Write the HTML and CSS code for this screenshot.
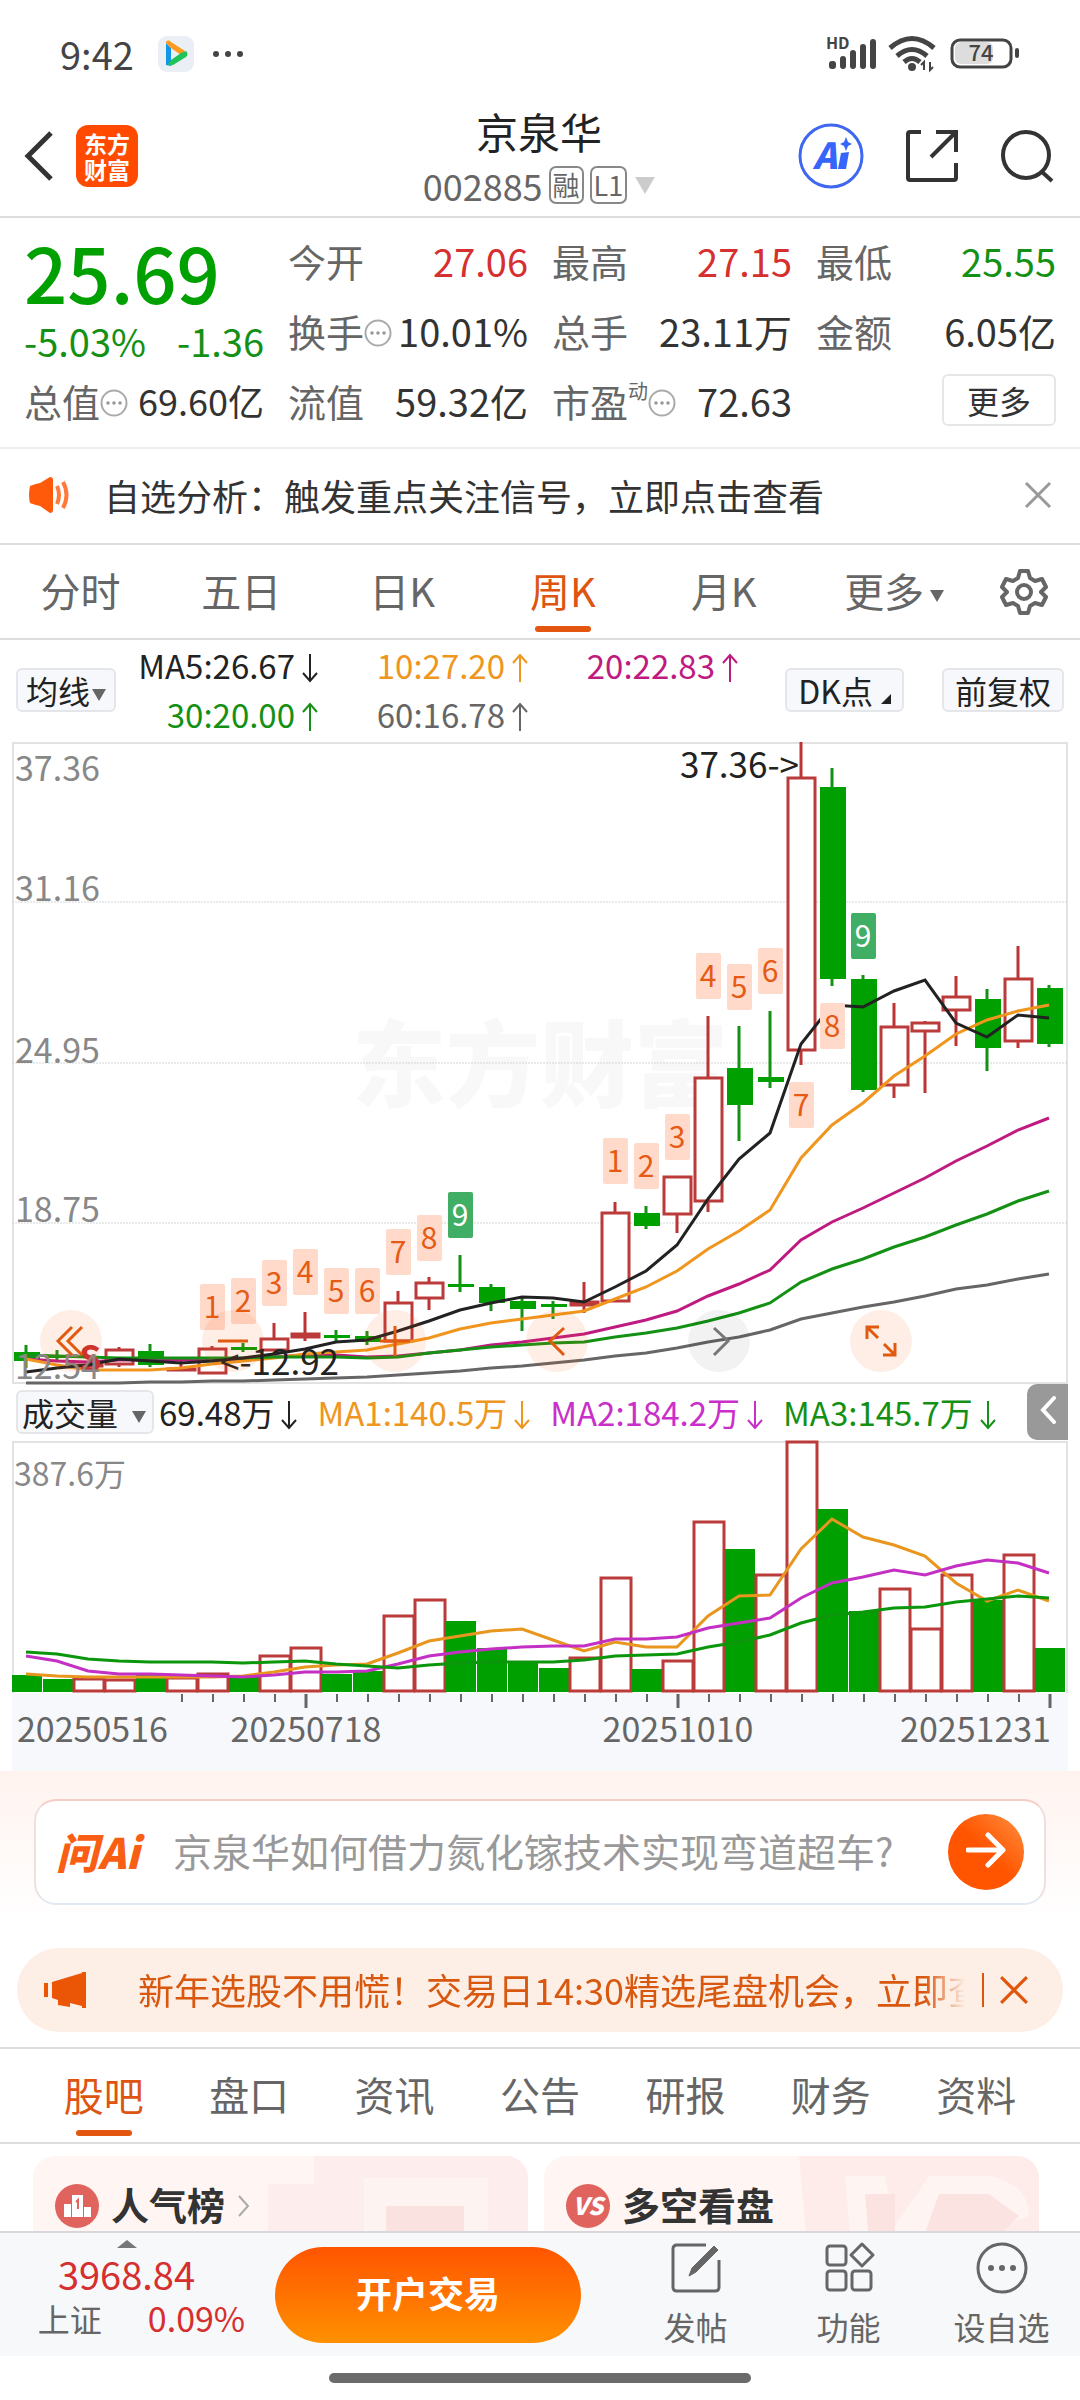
FILE: index.html
```html
<!DOCTYPE html>
<html lang="zh-CN">
<head>
  <meta charset="UTF-8">
  <meta name="viewport" content="width=device-width, initial-scale=1.0">
  <title>京泉华 002885</title>
  <link rel="stylesheet" href="styles.css">
</head>
<body>
  <!-- shared icons -->
  <svg class="sprite" aria-hidden="true">
    <symbol id="up" viewBox="0 0 18 30"><path d="M9 29V2M2 10l7-8 7 8" fill="none" stroke="currentColor" stroke-width="2"/></symbol>
    <symbol id="down" viewBox="0 0 18 30"><path d="M9 1v27M2 20l7 8 7-8" fill="none" stroke="currentColor" stroke-width="2"/></symbol>
    <symbol id="info" viewBox="0 0 28 28"><circle cx="14" cy="14" r="12.5" fill="none" stroke="#aaa" stroke-width="2"/><g fill="#999"><circle cx="8" cy="14" r="1.8"/><circle cx="14" cy="14" r="1.8"/><circle cx="20" cy="14" r="1.8"/></g></symbol>
    <symbol id="caret" viewBox="0 0 14 12"><path d="M0 0h14l-7 12z" fill="currentColor"/></symbol>
    <symbol id="close" viewBox="0 0 28 28"><path d="M2 2l24 24M26 2L2 26" fill="none" stroke="currentColor" stroke-width="3"/></symbol>
  </svg>

  <div class="status-bar">
    <span class="time">9:42</span>
    <svg class="app-icon" viewBox="0 0 36 36"><rect width="36" height="36" rx="9" fill="#e9eff5"/><path d="M8 7v22l5 1V12z" fill="#1296e8"/><path d="M8 7c0-3 3-3 5-1l14 9-4 4-10-7z" fill="#ff9a1f"/><path d="M13 24l10-7 5-2c2 2 2 4 0 6L15 29c-3 1-5 0-5-1z" fill="#20c35a"/></svg>
    <svg class="more-dots" viewBox="0 0 32 8" fill="#444"><circle cx="4" cy="4" r="3"/><circle cx="16" cy="4" r="3"/><circle cx="28" cy="4" r="3"/></svg>
    <svg class="status-icons" viewBox="0 0 194 40" fill="#444">
      <text x="0" y="15" class="hd">HD</text>
      <rect x="3" y="27" width="7" height="8" rx="3"/><rect x="14" y="22" width="6" height="13" rx="3"/><rect x="24" y="16" width="6" height="19" rx="3"/><rect x="34" y="10" width="6" height="25" rx="3"/><rect x="44" y="5" width="6" height="30" rx="3"/>
      <g fill="none" stroke="#444" stroke-width="5"><path d="M64 14q22-19 44 0"/><path d="M71 22q15-13 30 0"/><path d="M78 28q8-7 16 0"/></g>
      <circle cx="86" cy="33" r="4"/>
      <path d="M98 36v-8l-3 3M104 28v8l3-3" fill="none" stroke="#444" stroke-width="2"/>
      <rect x="129" y="8" width="38" height="22" rx="6" fill="#ddd"/>
      <rect x="126" y="6" width="59" height="27" rx="8" fill="none" stroke="#444" stroke-width="3"/>
      <rect x="189" y="14" width="4" height="10" rx="2"/>
      <text x="155" y="27" text-anchor="middle" class="battery">74</text>
    </svg>
  </div>

  <header class="header">
    <div class="header-side">
      <button class="icon-btn" aria-label="返回"><svg width="30" height="50" viewBox="0 0 30 50"><path d="M27 2L4 25l23 23" fill="none" stroke="#333" stroke-width="5"/></svg></button>
      <a class="logo" href="#">东方<br>财富</a>
    </div>
    <div class="header-title">
      <h1>京泉华</h1>
      <p>002885<span class="tag">融</span><span class="tag">L1</span><svg class="code-caret"><use href="#caret"/></svg></p>
    </div>
    <div class="header-side header-actions">
      <button class="icon-btn" aria-label="Ai"><svg width="66" height="66" viewBox="0 0 66 66"><circle cx="33" cy="33" r="31" fill="none" stroke="#3f67f0" stroke-width="3"/><text x="27" y="46" class="ai-text">A</text><path d="M43 30l8-1-3 17h-8z" fill="#3565fa"/><path d="M48 14l2 5 4 2-4 2-2 5-2-5-4-2 4-2z" fill="#3565fa"/></svg></button>
      <button class="icon-btn" aria-label="分享"><svg width="54" height="54" viewBox="0 0 54 54"><path d="M16 3H5q-2 0-2 2v44q0 2 2 2h44q2 0 2-2V34M31 3h20v20M51 3L26 28" fill="none" stroke="#333" stroke-width="4"/></svg></button>
      <button class="icon-btn" aria-label="搜索"><svg width="54" height="54" viewBox="0 0 54 54"><circle cx="26" cy="26" r="23" fill="none" stroke="#333" stroke-width="4"/><path d="M41 42l11 10" stroke="#333" stroke-width="4"/></svg></button>
    </div>
  </header>

  <main class="content">
    <section class="quote">
      <div class="price-box">
        <div class="price">25.69</div>
        <div class="change"><span>-5.03%</span><span>-1.36</span></div>
      </div>
      <div class="item"><span>今开</span><b class="red">27.06</b></div>
      <div class="item"><span>最高</span><b class="red">27.15</b></div>
      <div class="item"><span>最低</span><b class="green">25.55</b></div>
      <div class="item"><span>换手<svg class="info"><use href="#info"/></svg></span><b>10.01%</b></div>
      <div class="item"><span>总手</span><b>23.11万</b></div>
      <div class="item"><span>金额</span><b>6.05亿</b></div>
      <div class="item"><span>总值<svg class="info"><use href="#info"/></svg></span><b class="small">69.60亿</b></div>
      <div class="item"><span>流值</span><b>59.32亿</b></div>
      <div class="item"><span>市盈<sup>动</sup><svg class="info"><use href="#info"/></svg></span><b>72.63</b></div>
      <div class="item item-more"><button class="more-btn">更多</button></div>
    </section>

    <section class="notice">
      <svg class="speaker" viewBox="0 0 42 36"><path d="M2 9q5-2 10-3L22 0q3 0 3 3v30q0 3-3 3l-10-7q-5-1-10-3-2-8 0-17z" fill="#ff5a0a"/><path d="M29 9q4 9 0 18M35 5q7 13 0 26" fill="none" stroke="#ff7a3a" stroke-width="4"/></svg>
      <a class="notice-text" href="#">自选分析：触发重点关注信号，立即点击查看</a>
      <button class="icon-btn close-grey" aria-label="关闭"><svg width="28" height="28"><use href="#close"/></svg></button>
    </section>

    <nav class="period-tabs">
      <a href="#">分时</a>
      <a href="#">五日</a>
      <a href="#">日K</a>
      <a class="active" href="#">周K</a>
      <a href="#">月K</a>
      <a class="wide" href="#">更多<svg class="small-caret"><use href="#caret"/></svg></a>
      <button class="icon-btn gear" aria-label="设置"><svg width="48" height="48" viewBox="0 0 48 48" fill="none" stroke="#666" stroke-width="4"><path d="M20 3h8l2 7 5 3 7-2 4 8-5 5 5 5-4 8-7-2-5 3-2 7h-8l-2-7-5-3-7 2-4-8 5-5-5-5 4-8 7 2 5-3z" stroke-linejoin="round"/><circle cx="24" cy="24" r="7"/></svg></button>
    </nav>

    <section class="ma-row">
      <button class="chip">均线<svg class="small-caret"><use href="#caret"/></svg></button>
      <div class="ma-values">
        <span>MA5:26.67<svg class="arrow"><use href="#down"/></svg></span>
        <span class="orange">10:27.20<svg class="arrow"><use href="#up"/></svg></span>
        <span class="magenta">20:22.83<svg class="arrow"><use href="#up"/></svg></span>
        <span class="green">30:20.00<svg class="arrow"><use href="#up"/></svg></span>
        <span class="grey">60:16.78<svg class="arrow"><use href="#up"/></svg></span>
      </div>
      <button class="chip chip-wide chip-dk">DK点<svg class="corner" viewBox="0 0 10 10"><path d="M10 0v10H0z" fill="#222"/></svg></button>
      <button class="chip chip-wide">前复权</button>
    </section>

    <section class="chart">
      <svg id="priceChart" class="chart-svg" viewBox="0 0 1056 642"></svg>
      <div class="chart-tools">
        <button aria-label="最早"><svg viewBox="0 0 62 62"><path d="M32 17L18 31l14 14M42 17L28 31l14 14"/></svg></button>
        <button aria-label="缩小"><svg viewBox="0 0 62 62"><path d="M16 31h30"/></svg></button>
        <button aria-label="放大"><svg viewBox="0 0 62 62"><path d="M16 31h30M31 16v30"/></svg></button>
        <button aria-label="向左"><svg viewBox="0 0 62 62"><path d="M38 18L24 31l14 14"/></svg></button>
        <button class="off" aria-label="向右"><svg viewBox="0 0 62 62"><path d="M26 18l14 13-14 14"/></svg></button>
        <button aria-label="全屏"><svg viewBox="0 0 62 62"><path d="M17 29V17h12M17 17l11 11M45 33v12H33M45 45L34 34"/></svg></button>
      </div>
    </section>

    <section class="volume-row">
      <button class="chip">成交量<svg class="small-caret"><use href="#caret"/></svg></button>
      <span class="now">69.48万<svg class="arrow"><use href="#down"/></svg></span>
      <span class="orange">MA1:140.5万<svg class="arrow"><use href="#down"/></svg></span>
      <span class="purple">MA2:184.2万<svg class="arrow"><use href="#down"/></svg></span>
      <span class="green">MA3:145.7万<svg class="arrow"><use href="#down"/></svg></span>
      <button class="side-btn" aria-label="展开"><svg width="16" height="28" viewBox="0 0 16 28"><path d="M14 2L3 14l11 12" fill="none" stroke="#fff" stroke-width="4" stroke-linecap="round"/></svg></button>
    </section>
    <section class="chart">
      <svg id="volumeChart" class="chart-svg" viewBox="0 0 1056 330"></svg>
    </section>

    <section class="ask">
      <div class="ask-box">
        <span class="ask-logo">问Ai</span>
        <input type="text" aria-label="问Ai" placeholder="京泉华如何借力氮化镓技术实现弯道超车?">
        <button class="ask-btn" aria-label="提问"><svg width="40" height="36" viewBox="0 0 40 36"><path d="M2 18h34M22 3l15 15-15 15" fill="none" stroke="#fff" stroke-width="5" stroke-linecap="round" stroke-linejoin="round"/></svg></button>
      </div>
      <div class="promo">
        <svg class="horn" viewBox="0 0 42 36" fill="#ea5506"><rect y="11" width="4" height="14"/><path d="M8 10L38 1v-1h4v36h-4v-2l-12-3v4l-12-2v-5l-6-2z"/></svg>
        <a class="promo-text" href="#">新年选股不用慌！交易日14:30精选尾盘机会，立即查看</a>
        <button class="icon-btn close-orange" aria-label="关闭"><svg width="30" height="30"><use href="#close"/></svg></button>
      </div>
    </section>

    <nav class="info-tabs">
      <a class="active" href="#">股吧</a>
      <a href="#">盘口</a>
      <a href="#">资讯</a>
      <a href="#">公告</a>
      <a href="#">研报</a>
      <a href="#">财务</a>
      <a href="#">资料</a>
    </nav>

    <section class="cards">
      <a class="card" href="#">
        <svg class="card-bg" viewBox="0 0 260 110"><path d="M0 28h46V0h214v110H0z" fill="#fbe9e7" opacity=".6"/><path d="M16 110V76h80V22h124v88z" fill="#fdf3f1"/><path d="M118 110V50h78v60z" fill="#f9e2e0"/></svg>
        <svg class="card-icon" viewBox="0 0 44 44"><circle cx="22" cy="22" r="22" fill="#e0635e"/><path d="M9 33V20h7v13zM17 33V11h11v22zM29 33V23h7v10z" fill="#fff"/><path d="M21 18l2-2v9" fill="none" stroke="#e0635e" stroke-width="2"/></svg>
        <h2>人气榜</h2>
        <svg width="14" height="22" viewBox="0 0 14 22"><path d="M2 1l9 10-9 10" fill="none" stroke="#aaa" stroke-width="2"/></svg>
      </a>
      <a class="card" href="#">
        <svg class="card-bg" viewBox="0 0 260 110"><path d="M20 0h240v110H30z" fill="#fdecea"/><path d="M66 20h40l10 50 34-50h60q40 8 40 40l-22 8q-24-20-48 0l-4 42H74z" fill="#fef4f2"/><path d="M86 38h30v72H92zM160 38h50l30 22-50 50h-56z" fill="#fbe3e1"/></svg>
        <svg class="card-icon" viewBox="0 0 44 44"><circle cx="22" cy="22" r="22" fill="#e0635e"/><text x="22" y="31" text-anchor="middle" class="vs">VS</text></svg>
        <h2>多空看盘</h2>
      </a>
    </section>
  </main>

  <footer class="bottom-bar">
    <a class="index" href="#">
      <svg class="index-caret" viewBox="0 0 20 8"><path d="M0 8h20L10 0z" fill="#777"/></svg>
      <span class="index-value">3968.84</span>
      <span class="index-line"><i>上证</i>0.09%</span>
    </a>
    <button class="trade-btn">开户交易</button>
    <a class="tool" href="#"><svg width="52" height="52" viewBox="0 0 52 52" fill="none" stroke="#666" stroke-width="3"><path d="M36 3H7q-4 0-4 4v38q0 4 4 4h38q4 0 4-4V18"/><path d="M19 34l3-8L44 4l4 4-22 22z" fill="#666" stroke-width="1"/></svg>发帖</a>
    <a class="tool" href="#"><svg width="52" height="52" viewBox="0 0 52 52" fill="none" stroke="#666" stroke-width="3"><rect x="4" y="4" width="19" height="19" rx="3"/><rect x="4" y="29" width="19" height="19" rx="3"/><rect x="29" y="29" width="19" height="19" rx="3"/><path d="M39 2l11 11-11 11-11-11z" stroke-linejoin="round"/></svg>功能</a>
    <a class="tool" href="#"><svg width="52" height="52" viewBox="0 0 52 52"><circle cx="26" cy="26" r="24" fill="none" stroke="#666" stroke-width="3"/><g fill="#666"><circle cx="15" cy="26" r="3"/><circle cx="26" cy="26" r="3"/><circle cx="37" cy="26" r="3"/></g></svg>设自选</a>
  </footer>
  <div class="home-area"><div class="home-line"></div></div>

  <script>
    const STEP = 31;

    // [direction, high, body top, body bottom, low]
    const candles = [
      ['g', 603, 610, 619, 626], ['g', 608, 614, 616, 619], ['r', 620, 623, 624, 628], ['r', 605, 608, 622, 625],
      ['g', 602, 609, 623, 625], ['r', 617, 627, 628, 629], ['r', 604, 607, 631, 632], ['g', 601, 605, 608, 610],
      ['r', 581, 597, 608, 608], ['r', 570, 592, 595, 599], ['g', 588, 593, 596, 599], ['g', 589, 594, 600, 603],
      ['r', 549, 561, 599, 599], ['r', 535, 541, 556, 568], ['g', 513, 542, 545, 550], ['g', 542, 545, 561, 569],
      ['g', 556, 559, 567, 589], ['g', 559, 562, 565, 577], ['r', 540, 560, 563, 571], ['r', 460, 471, 559, 560],
      ['g', 464, 471, 484, 487], ['r', 435, 435, 472, 491], ['r', 274, 336, 459, 470], ['g', 284, 326, 363, 399],
      ['g', 269, 335, 340, 346], ['r', 0, 36, 308, 323], ['g', 26, 45, 237, 244], ['g', 233, 237, 348, 350],
      ['r', 261, 285, 343, 356], ['r', 279, 281, 289, 351], ['r', 234, 255, 268, 304], ['g', 247, 257, 306, 329],
      ['r', 204, 237, 299, 306], ['g', 243, 246, 302, 305]
    ];

    const priceLines = {
      '#666666': [641, 641, 641, 641, 640, 640, 639, 639, 638, 637, 636, 635, 633, 631, 629, 626, 624, 621, 618, 614, 611, 606, 600, 595, 588, 577, 571, 565, 560, 554, 547, 543, 537, 532],
      '#bf1a80': [617, 619, 620, 618, 618, 618, 617, 617, 615, 613, 613, 615, 614, 611, 608, 603, 600, 596, 592, 585, 578, 569, 554, 542, 528, 498, 480, 466, 451, 436, 419, 404, 388, 376],
      '#f0961e': [617, 623, 628, 628, 628, 626, 622, 619, 616, 612, 610, 608, 602, 596, 587, 581, 577, 573, 569, 557, 545, 529, 507, 489, 468, 416, 383, 361, 334, 314, 292, 278, 269, 263],
      '#149114': [613, 614, 615, 616, 616, 616, 616, 616, 615, 615, 615, 616, 615, 611, 608, 605, 603, 601, 600, 595, 591, 586, 579, 571, 561, 540, 527, 517, 505, 495, 483, 472, 459, 449],
      '#222222': [630, 626, 623, 617, 619, 621, 619, 616, 612, 607, 600, 598, 589, 579, 568, 561, 555, 556, 560, 545, 529, 503, 457, 417, 391, 302, 263, 265, 249, 238, 281, 295, 273, 276]
    };

    // [slot, number, top]
    const marks = [
      [6, 1, 542], [7, 2, 536], [8, 3, 518], [9, 4, 507], [10, 5, 526], [11, 6, 526], [12, 7, 487], [13, 8, 473], [14, 9, 450],
      [19, 1, 396], [20, 2, 401], [21, 3, 372], [22, 4, 211], [23, 5, 222], [24, 6, 206], [25, 7, 340], [26, 8, 261], [27, 9, 171]
    ];

    const volumeTops = [234, 238, 238, 239, 232, 237, 233, 236, 215, 207, 233, 230, 175, 159, 180, 207, 220, 227, 217, 137, 228, 220, 81, 108, 134, 1, 68, 170, 148, 188, 134, 159, 114, 207];

    const volumeLines = {
      '#e8961e': [233, 235, 236, 236, 236, 236, 236, 235, 231, 226, 224, 223, 212, 200, 195, 190, 188, 199, 210, 201, 206, 206, 175, 155, 154, 108, 78, 96, 104, 115, 142, 160, 149, 160],
      '#c42fc4': [215, 220, 230, 233, 233, 234, 235, 236, 234, 231, 231, 230, 223, 215, 211, 208, 206, 205, 205, 198, 198, 196, 187, 182, 177, 157, 142, 136, 129, 134, 125, 119, 122, 132],
      '#0c960c': [211, 213, 218, 220, 221, 221, 221, 222, 221, 220, 223, 225, 227, 224, 222, 221, 221, 221, 219, 215, 214, 213, 206, 201, 194, 182, 174, 171, 167, 166, 161, 158, 155, 157]
    };

    function drawLines(lines) {
      return Object.entries(lines).map(([color, ys]) => {
        const points = ys.map((y, i) => `${14 + STEP * i},${y}`).join(' ');
        return `<polyline class="line" points="${points}" stroke="${color}"/>`;
      }).join('');
    }

    function drawPrice() {
      let html = '<text class="watermark" x="340" y="358">东方财富</text>';
      html += '<path class="frame" d="M1 1H1055V641H1z"/>';
      [160, 321, 481].forEach(y => {
        html += `<path class="grid" d="M0 ${y}H1056"/>`;
      });
      candles.forEach(([dir, high, top, bottom, low], i) => {
        const x = 14 + STEP * i;
        html += `<path class="wick-${dir}" d="M${x} ${high}V${top}M${x} ${bottom}V${low}"/>`;
        if (dir === 'g') {
          html += `<rect class="fill-g" x="${x - 12}" y="${top}" width="26" height="${bottom - top}"/>`;
        } else {
          html += `<rect class="box-r" x="${x - 13}" y="${top}" width="27" height="${bottom - top}"/>`;
        }
      });
      html += drawLines(priceLines);
      marks.forEach(([slot, n, top]) => {
        const x = 14 + STEP * slot;
        const cls = n === 9 ? 'mark mark-9' : 'mark';
        html += `<g class="${cls}"><rect x="${x - 12}" y="${top}" width="25" height="46" rx="2"/><text x="${x}" y="${top + 34}">${n}</text></g>`;
      });
      html += '<text class="sell" x="67" y="630">S</text>';
      [['37.36', 39], ['31.16', 159], ['24.95', 321], ['18.75', 480], ['12.54', 637]].forEach(([t, y]) => {
        html += `<text class="scale" x="3" y="${y}">${t}</text>`;
      });
      html += '<text class="note" x="787" y="36" text-anchor="end">37.36-&gt;</text>';
      html += '<text class="note" x="208" y="633">&lt;-12.92</text>';
      document.getElementById('priceChart').innerHTML = html;
    }

    function drawVolume() {
      let html = '<rect class="axis-bg" x="0" y="252" width="1056" height="78"/><path class="frame" d="M1 252V1H1055V252"/>';
      volumeTops.forEach((top, i) => {
        const x = STEP * i;
        if (candles[i][0] === 'g' && i !== 24) {
          html += `<rect class="fill-g" x="${x}" y="${top}" width="30" height="${251 - top}"/>`;
        } else {
          html += `<rect class="box-r" x="${x}" y="${top}" width="30" height="${250 - top}"/>`;
        }
        if (i > 4) {
          const big = i === 9 || i === 21 || i === 33;
          html += `<path class="${big ? 'tick big' : 'tick'}" d="M${x + 15} 253v${big ? 14 : 8}"/>`;
        }
      });
      html += drawLines(volumeLines);
      html += '<text class="scale volume-scale" x="2" y="45">387.6万</text>';
      html += '<text class="date" x="5" y="301">20250516</text>';
      html += '<text class="date" x="294" y="301" text-anchor="middle">20250718</text>';
      html += '<text class="date" x="666" y="301" text-anchor="middle">20251010</text>';
      html += '<text class="date" x="1039" y="301" text-anchor="end">20251231</text>';
      document.getElementById('volumeChart').innerHTML = html;
    }

    drawPrice();
    drawVolume();
  </script>
</body>
</html>
```
FILE: styles.css
```css
*, *::before, *::after {
  box-sizing: border-box;
}

body {
  margin: 0;
  height: 100vh;
  display: flex;
  flex-direction: column;
  font-family: "Noto Sans CJK SC", "Noto Sans", sans-serif;
  background: #fff;
  color: #222;
}

a {
  color: inherit;
  text-decoration: none;
}

button {
  font-family: inherit;
  color: inherit;
  border: none;
  padding: 0;
  background: none;
  cursor: pointer;
}

svg {
  flex: none;
}

.sprite {
  position: absolute;
  width: 0;
  height: 0;
}

.icon-btn {
  display: flex;
  align-items: center;
  justify-content: center;
}

.red { color: #d62f2f; }
.green { color: #149114; }
.orange { color: #ee961e; }
.magenta { color: #bf1a80; }
.purple { color: #c92fc9; }
.grey { color: #666; }

/* status bar */
.status-bar {
  height: 108px;
  flex: none;
  padding: 0 60px;
  display: flex;
  align-items: center;
  color: #444;
}

.time {
  font-size: 38px;
  line-height: 40px;
}

.app-icon {
  width: 36px;
  height: 36px;
  margin-left: 24px;
}

.more-dots {
  width: 32px;
  height: 8px;
  margin-left: 18px;
}

.status-icons {
  width: 194px;
  height: 40px;
  margin-left: auto;
  overflow: visible;
}

.hd {
  font-size: 16px;
  font-weight: 700;
}

.battery {
  font-size: 22px;
  font-weight: 500;
}

/* header */
.header {
  height: 110px;
  flex: none;
  padding: 0 26px 0 24px;
  display: grid;
  grid-template-columns: 1fr auto 1fr;
  grid-template-rows: 96px;
  align-items: center;
  border-bottom: 2px solid #ddd;
}

.header-side {
  display: flex;
  align-items: center;
  gap: 22px;
}

.header-actions {
  justify-content: flex-end;
  gap: 41px;
}

.logo {
  width: 62px;
  height: 62px;
  border-radius: 12px;
  background: #ff4a00;
  color: #fff;
  font-size: 23px;
  font-weight: 700;
  line-height: 26px;
  padding-top: 5px;
  text-align: center;
}

.header-title {
  padding-top: 4px;
  text-align: center;
}

.header-title h1 {
  margin: 0;
  font-size: 42px;
  font-weight: 400;
  line-height: 54px;
}

.header-title p {
  margin: 0;
  display: flex;
  align-items: center;
  gap: 6px;
  font-size: 36px;
  line-height: 54px;
  color: #666;
}

.tag {
  height: 38px;
  padding: 0 2px;
  border: 2px solid #888;
  border-radius: 7px;
  font-size: 27px;
  line-height: 33px;
}

.code-caret {
  width: 20px;
  height: 17px;
  margin-left: 2px;
  color: #ccc;
}

.ai-text {
  font-size: 36px;
  font-weight: 900;
  font-style: italic;
  fill: #3565fa;
  text-anchor: middle;
}

/* main part, cut by the bottom bar */
.content {
  flex: 1;
  min-height: 0;
  overflow: hidden;
}

.quote {
  padding: 7px 24px 12px;
  display: grid;
  grid-template-columns: repeat(4, 1fr);
  grid-auto-rows: 70px;
  column-gap: 24px;
  border-bottom: 2px solid #eee;
}

.price-box {
  grid-row: span 2;
  color: #00a000;
}

.price {
  font-size: 76px;
  font-weight: 500;
  line-height: 92px;
}

.change {
  display: flex;
  justify-content: space-between;
  font-size: 38px;
  line-height: 48px;
  color: #149114;
}

.item {
  display: flex;
  align-items: center;
  justify-content: space-between;
  white-space: nowrap;
  font-size: 38px;
  color: #666;
}

.item b {
  font-weight: 400;
}

.item b:not(.red):not(.green) {
  color: #333;
}

.item .small {
  font-size: 36px;
}

.item sup {
  font-size: 20px;
  line-height: 20px;
  vertical-align: 18px;
}

.info {
  width: 28px;
  height: 28px;
}

.item-more {
  justify-content: flex-end;
}

.more-btn {
  width: 114px;
  height: 52px;
  border: 2px solid #e6e6e6;
  border-radius: 6px;
  font-size: 32px;
  line-height: 46px;
  color: #333;
}

.notice {
  height: 96px;
  padding: 0 28px 2px;
  display: flex;
  align-items: center;
  border-bottom: 2px solid #ddd;
}

.speaker {
  width: 42px;
  height: 36px;
}

.notice-text {
  flex: 1;
  margin-left: 34px;
  font-size: 36px;
  color: #333;
}

.close-grey {
  color: #999;
}

/* tabs */
.period-tabs,
.info-tabs {
  height: 95px;
  display: flex;
  align-items: stretch;
  border-bottom: 2px solid #ddd;
  font-size: 40px;
  line-height: 90px;
  color: #666;
}

.period-tabs a,
.info-tabs a {
  flex: 161;
  position: relative;
  text-align: center;
  white-space: nowrap;
}

.period-tabs .wide {
  flex: 180;
}

.period-tabs .gear {
  flex: none;
  width: 96px;
  padding-right: 17px;
}

.period-tabs .active,
.info-tabs .active {
  color: #dd5510;
}

.period-tabs .active::after,
.info-tabs .active::after {
  content: "";
  position: absolute;
  left: 50%;
  bottom: 6px;
  width: 56px;
  height: 6px;
  margin-left: -28px;
  border-radius: 3px;
  background: #e3560f;
}

.info-tabs {
  padding: 0 31px;
}

.small-caret {
  width: 14px;
  height: 12px;
  margin-left: 6px;
  color: #666;
  vertical-align: middle;
}

/* moving averages */
.ma-row {
  height: 102px;
  padding: 0 16px 2px;
  display: flex;
  align-items: center;
}

.chip {
  height: 44px;
  padding: 0 8px;
  border: 2px solid #e4e6ea;
  border-radius: 6px;
  background: #f7f8fb;
  font-size: 32px;
  line-height: 36px;
  white-space: nowrap;
}

.chip-wide {
  padding: 0 11px;
}

.chip .small-caret {
  margin-left: 2px;
}

.ma-values {
  display: grid;
  grid-template-columns: 203px 210px 210px;
  font-size: 33px;
  line-height: 49px;
  text-align: right;
}

.arrow {
  width: 18px;
  height: 30px;
  margin-left: 6px;
  vertical-align: -4px;
}

.chip-dk {
  margin-left: auto;
  margin-right: 38px;
}

.corner {
  width: 10px;
  height: 10px;
  margin-left: 8px;
}

/* charts */
.chart {
  position: relative;
  padding: 0 12px;
}

.chart-svg {
  display: block;
  width: 100%;
  height: auto;
  overflow: visible;
}

.watermark {
  font-size: 94px;
  font-weight: 900;
  fill: #f8f8f8;
}

.frame {
  fill: none;
  stroke: #e2e2e2;
  stroke-width: 2;
}

.grid {
  stroke: #d5d5d5;
  stroke-width: 1;
  stroke-dasharray: 2 1;
}

.line {
  fill: none;
  stroke-width: 3;
}

.wick-g {
  stroke: #149114;
  stroke-width: 3;
}

.wick-r {
  stroke: #bb3535;
  stroke-width: 3;
}

.fill-g {
  fill: #00a000;
}

.box-r {
  fill: #fff;
  stroke: #bb3a3a;
  stroke-width: 3;
}

.mark rect {
  fill: #ffdacb;
}

.mark text {
  font-size: 30px;
  text-anchor: middle;
  fill: #e65a14;
}

.mark-9 rect {
  fill: #40ae64;
}

.mark-9 text {
  fill: #fff;
}

.sell {
  font-size: 36px;
  font-weight: 700;
  fill: #c93030;
}

.scale {
  font-size: 34px;
  fill: #888;
}

.volume-scale {
  font-size: 32px;
}

.note {
  font-size: 35px;
  fill: #222;
}

.axis-bg {
  fill: #f7f8fb;
}

.tick {
  stroke: #666;
  stroke-width: 2;
}

.tick.big {
  stroke-width: 3;
}

.date {
  font-size: 34px;
  fill: #666;
}

.chart-tools {
  position: absolute;
  left: 40px;
  bottom: 12px;
  display: flex;
  gap: 100px;
}

.chart-tools button {
  width: 62px;
  height: 62px;
  border-radius: 50%;
  background: rgba(255, 90, 10, 0.1);
}

.chart-tools svg {
  display: block;
  fill: none;
  stroke: #e05a10;
  stroke-width: 3;
}

.chart-tools .off {
  background: rgba(0, 0, 0, 0.05);
}

.chart-tools .off svg {
  stroke: #777;
}

.volume-row {
  height: 57px;
  padding: 0 12px 2px 16px;
  display: flex;
  align-items: center;
  gap: 19px;
  font-size: 33px;
  white-space: nowrap;
}

.volume-row .chip {
  padding: 0 6px 0 4px;
}

.volume-row .chip .small-caret {
  margin-left: 14px;
}

.volume-row .now {
  margin-left: -14px;
}

.side-btn {
  width: 41px;
  height: 56px;
  margin-left: auto;
  border-radius: 10px 0 0 10px;
  background: #999;
}

/* ask box and promo */
.ask {
  padding: 28px 17px 15px;
  background: linear-gradient(#fff3ef, #fff 150px);
  border-bottom: 2px solid #ddd;
}

.ask-box {
  height: 106px;
  margin: 0 17px;
  padding: 0 20px;
  display: flex;
  align-items: center;
  border: 2px solid;
  border-color: #f6cdc4 #efe0e0 #e2e8ef;
  border-radius: 22px;
  background: #fff;
}

.ask-logo {
  width: 117px;
  padding-bottom: 4px;
  font-size: 42px;
  font-weight: 900;
  font-style: italic;
  color: #f85f14;
}

.ask-box input {
  flex: 1;
  min-width: 0;
  border: none;
  padding: 0 0 4px;
  outline: none;
  font-family: inherit;
  font-size: 39px;
  background: none;
}

.ask-box input::placeholder {
  color: #999;
  opacity: 1;
}

.ask-btn {
  width: 76px;
  height: 76px;
  border-radius: 50%;
  background: linear-gradient(45deg, #ff5500 50%, #ff9040);
}

.promo {
  height: 84px;
  margin-top: 43px;
  padding: 0 34px 0 27px;
  display: flex;
  align-items: center;
  border-radius: 42px;
  background: #fdeee6;
  color: #d9580f;
}

.horn {
  width: 42px;
  height: 36px;
}

.promo-text {
  flex: 1;
  margin-left: 52px;
  margin-right: 17px;
  padding-bottom: 2px;
  overflow: hidden;
  white-space: nowrap;
  font-size: 36px;
  -webkit-mask-image: linear-gradient(to left, transparent, #000 40px);
  mask-image: linear-gradient(to left, transparent, #000 40px);
}

.close-orange {
  height: 34px;
  padding-left: 15px;
  border-left: 2px solid #d9580f;
  color: #e0560c;
}

/* cards */
.cards {
  padding: 12px 41px 0 33px;
  display: grid;
  grid-template-columns: 1fr 1fr;
  gap: 16px;
}

.card {
  position: relative;
  height: 110px;
  padding: 0 22px 10px;
  display: flex;
  align-items: center;
  gap: 12px;
  overflow: hidden;
  border-radius: 22px 22px 0 0;
  background: #fff6f4;
}

.card > * {
  z-index: 1;
}

.card .card-bg {
  position: absolute;
  top: 0;
  right: 0;
  z-index: 0;
  height: 110px;
}

.card-icon {
  width: 44px;
  height: 44px;
}

.card h2 {
  margin: 0;
  padding-bottom: 6px;
  font-size: 38px;
  font-weight: 700;
  color: #333;
}

.vs {
  font-size: 24px;
  font-weight: 900;
  font-style: italic;
  fill: #fff;
}

/* bottom bar */
.bottom-bar {
  height: 125px;
  flex: none;
  padding-right: 2px;
  display: flex;
  align-items: center;
  border-top: 2px solid #d8d8dc;
  background: #f7f8fa;
}

.index {
  width: 275px;
  height: 100%;
  padding: 7px 22px 0 0;
  display: flex;
  flex-direction: column;
  align-items: center;
  font-size: 34px;
  color: #d62f2f;
}

.index-caret {
  width: 20px;
  height: 8px;
}

.index-value {
  font-size: 38px;
  line-height: 44px;
  margin-top: 4px;
}

.index-line {
  display: flex;
  align-items: center;
  gap: 46px;
  padding-left: 30px;
  line-height: 44px;
}

.index-line i {
  font-style: normal;
  font-size: 32px;
  color: #666;
}

.trade-btn {
  width: 306px;
  height: 96px;
  padding-bottom: 6px;
  border-radius: 48px;
  background: linear-gradient(#ff5500, #ff9000);
  color: #fff;
  font-size: 36px;
  font-weight: 700;
}

.tool {
  flex: 1;
  display: flex;
  flex-direction: column;
  align-items: center;
  gap: 10px;
  font-size: 32px;
  line-height: 44px;
  color: #666;
}

.trade-btn + .tool {
  margin-left: 38px;
}

.home-area {
  height: 44px;
  flex: none;
  display: flex;
  justify-content: center;
  align-items: center;
}

.home-line {
  width: 39%;
  height: 10px;
  border-radius: 5px;
  background: #6b6b6b;
}
```
